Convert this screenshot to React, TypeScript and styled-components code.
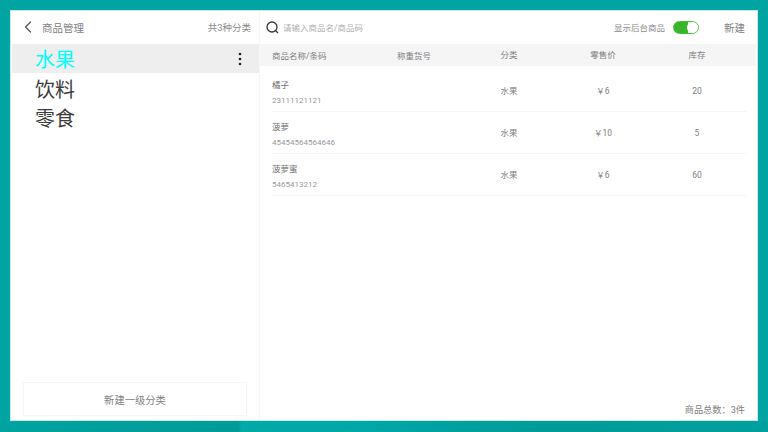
import { createGlobalStyle, styled } from "styled-components";
import { ChevronLeft } from "lucide-react";

const GlobalStyle = createGlobalStyle`
  html, body {
    margin: 0;
    padding: 0;
    width: 768px;
    height: 432px;
    overflow: hidden;
    font-family: Roboto, "Noto Sans CJK SC", sans-serif;
  }
`;

// the wallpaper has faceted bands, only really visible along the bottom edge
const Screen = styled.div`
  width: 768px;
  height: 432px;
  box-sizing: border-box;
  padding: 10px 10px 11px;
  background-color: #00a4a0;
  background-image: linear-gradient(
    90deg,
    #00a3a0 0%,
    #009c9a 26%,
    #009a98 31%,
    #00aaa8 31.5%,
    #00a6a5 50%,
    #009a98 72%,
    #00a09e 100%
  );
  background-size: 100% 11px;
  background-position: bottom;
  background-repeat: no-repeat;
`;

const Window = styled.div`
  height: 100%;
  display: flex;
  background: #fff;
  outline: 1px solid #c4ebe9;
  outline-offset: -1px;
`;

const Sidebar = styled.aside`
  width: 250px;
  flex: none;
  display: flex;
  flex-direction: column;
  box-sizing: border-box;
  border-right: 1px solid #f6f6f6;
`;

const SideHeader = styled.div`
  height: 34px;
  flex: none;
  display: flex;
  align-items: center;
  padding: 0 8px;
`;

const BackIcon = styled(ChevronLeft)`
  width: 20px;
  height: 20px;
  color: #555;
  stroke-width: 1.5;
  margin-right: 4px;
`;

const PageTitle = styled.span`
  font-size: 10.5px;
  color: #808080;
  flex: 1;
`;

const SmallCount = styled.span`
  font-size: 9.5px;
  color: #8c8c8c;
`;

const CategoryList = styled.div`
  flex: 1;
  padding-left: 2px;
`;

const CategoryRow = styled.div<{ $active?: boolean }>`
  height: 29px;
  margin-bottom: 0.5px;
  display: flex;
  align-items: center;
  justify-content: space-between;
  padding: 0 13px 0 23px;
  font-size: 20px;
  color: ${(p) => (p.$active ? "#00ffff" : "#3c3c3c")};
  background: ${(p) => (p.$active ? "#eeeeee" : "transparent")};
`;

const MoreIcon = styled.svg`
  width: 12px;
  height: 16px;
  fill: #222;
`;

const NewCategory = styled.div`
  height: 34px;
  margin: 0 12px 5px 13px;
  display: flex;
  align-items: center;
  justify-content: center;
  flex: none;
  box-sizing: border-box;
  border: 1px solid #f6f6f6;
  font-size: 10.3px;
  color: #808080;
`;

const Main = styled.main`
  flex: 1;
  min-width: 0;
  display: flex;
  flex-direction: column;
`;

const TopBar = styled.div`
  height: 34px;
  flex: none;
  display: flex;
  align-items: center;
  padding: 0 13px 0 6px;
`;

const SearchIcon = styled.svg`
  width: 13px;
  height: 13px;
  fill: none;
  stroke: #333;
  stroke-width: 1.3;
  margin-right: 4px;
`;

const Placeholder = styled.span`
  flex: 1;
  font-size: 8.5px;
  color: #b0b0b0;
`;

const ToggleLabel = styled.span`
  font-size: 8.5px;
  color: #8c8c8c;
  margin-right: 8px;
`;

const Toggle = styled.div`
  width: 26px;
  height: 13px;
  box-sizing: border-box;
  border: 1px solid #45bb38;
  border-radius: 7px;
  background: linear-gradient(90deg, #38b52c 60%, #d8f0d4 60%);
  display: flex;
  justify-content: flex-end;
  margin-right: 25px;
`;

const Knob = styled.div`
  width: 11px;
  height: 11px;
  border-radius: 50%;
  background: #fff;
`;

const CreateLink = styled.span`
  font-size: 10.5px;
  color: #808080;
`;

const TableGrid = styled.div`
  display: grid;
  grid-template-columns: 125px 65px 94px 94px 94px;
  align-items: center;
  font-size: 8.5px;
  color: #808080;
`;

const HeadRow = styled(TableGrid)`
  height: 22px;
  padding-left: 12px;
  margin-right: 2px;
  background: #f5f5f5;
`;

const BodyRow = styled(TableGrid)`
  height: 42px;
  margin: 0 12px;
  box-sizing: border-box;
  border-bottom: 1px solid #f5f5f5;
  &:first-child {
    height: 46px;
    padding-top: 4px;
  }
`;

const Centered = styled.span`
  text-align: center;
  line-height: 13px;
`;

const BodyCell = styled(Centered)`
  padding-top: 2px;
`;

const NameCell = styled.div`
  display: flex;
  flex-direction: column;
  gap: 4px;
  padding-top: 3px;
`;

const ItemName = styled.span`
  font-size: 8.5px;
  color: #707070;
  line-height: 12px;
`;

const Barcode = styled.span`
  font-size: 8px;
  color: #999;
  line-height: 11px;
  white-space: nowrap;
`;

const Rows = styled.div`
  flex: 1;
`;

const Footer = styled.div`
  height: 26px;
  flex: none;
  display: flex;
  align-items: center;
  justify-content: flex-end;
  padding: 1px 13px 0 0;
  box-sizing: border-box;
  font-size: 9.2px;
  color: #808080;
`;

const categories = ["水果", "饮料", "零食"];

const products = [
  { name: "橘子", code: "23111121121", price: "￥6", stock: 20 },
  { name: "菠萝", code: "45454564564646", price: "￥10", stock: 5 },
  { name: "菠萝蜜", code: "5465413212", price: "￥6", stock: 60 },
];

export default function App() {
  return (
    <Screen>
      <GlobalStyle />
      <Window>
        <Sidebar>
          <SideHeader>
            <BackIcon />
            <PageTitle>商品管理</PageTitle>
            <SmallCount>共3种分类</SmallCount>
          </SideHeader>
          <CategoryList>
            {categories.map((c, i) => (
              <CategoryRow key={c} $active={i === 0}>
                {c}
                {i === 0 && (
                  <MoreIcon viewBox="0 0 12 16">
                    <circle cx="6" cy="3" r="1.3" />
                    <circle cx="6" cy="8" r="1.3" />
                    <circle cx="6" cy="13" r="1.3" />
                  </MoreIcon>
                )}
              </CategoryRow>
            ))}
          </CategoryList>
          <NewCategory>新建一级分类</NewCategory>
        </Sidebar>
        <Main>
          <TopBar>
            <SearchIcon viewBox="0 0 13 13">
              <circle cx="6" cy="6" r="5" />
              <path d="M9.6 9.6 12 12" />
            </SearchIcon>
            <Placeholder>请输入商品名/商品码</Placeholder>
            <ToggleLabel>显示后台商品</ToggleLabel>
            <Toggle>
              <Knob />
            </Toggle>
            <CreateLink>新建</CreateLink>
          </TopBar>
          <HeadRow>
            <span>商品名称/条码</span>
            <span>称重货号</span>
            <Centered>分类</Centered>
            <Centered>零售价</Centered>
            <Centered>库存</Centered>
          </HeadRow>
          <Rows>
            {products.map((p) => (
              <BodyRow key={p.code}>
                <NameCell>
                  <ItemName>{p.name}</ItemName>
                  <Barcode>{p.code}</Barcode>
                </NameCell>
                <span />
                <BodyCell>水果</BodyCell>
                <BodyCell>{p.price}</BodyCell>
                <BodyCell>{p.stock}</BodyCell>
              </BodyRow>
            ))}
          </Rows>
          <Footer>商品总数：3件</Footer>
        </Main>
      </Window>
    </Screen>
  );
}
